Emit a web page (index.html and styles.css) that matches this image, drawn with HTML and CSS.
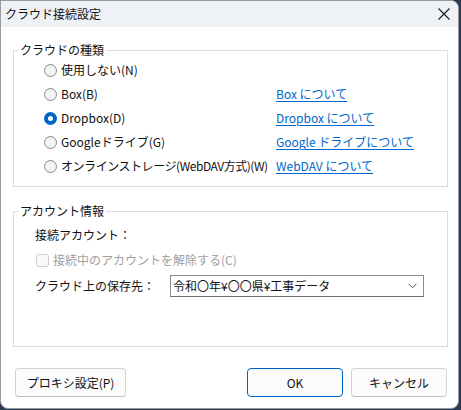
FILE: index.html
```html
<!DOCTYPE html>
<html lang="ja">
<head>
<meta charset="utf-8">
<link rel="stylesheet" href="styles.css">
</head>
<body>
<div class="window">
  <div class="titlebar">
    <span class="title">クラウド接続設定</span>
    <svg class="close" width="14" height="14" viewBox="0 0 14 14"><path d="M1.5 1.5 L12.5 12.5 M12.5 1.5 L1.5 12.5" stroke="#1a1a1a" stroke-width="1.1" fill="none"/></svg>
  </div>
  <div class="content">
    <fieldset class="group group-cloud">
      <legend>クラウドの種類</legend>
      <div class="group-body cloud-body">
        <div class="row"><span class="radio"></span><span class="label">使用しない(N)</span></div>
        <div class="row"><span class="radio"></span><span class="label">Box(B)</span><a class="link">Box について</a></div>
        <div class="row"><span class="radio checked"></span><span class="label">Dropbox(D)</span><a class="link">Dropbox について</a></div>
        <div class="row"><span class="radio"></span><span class="label">Googleドライブ(G)</span><a class="link">Google ドライブについて</a></div>
        <div class="row"><span class="radio"></span><span class="label narrow">オンラインストレージ(WebDAV方式)(W)</span><a class="link">WebDAV について</a></div>
      </div>
    </fieldset>
    <fieldset class="group group-account">
      <legend>アカウント情報</legend>
      <div class="group-body account-body">
        <div class="arow">接続アカウント：</div>
        <div class="arow disabled"><span class="checkbox"></span><span>接続中のアカウントを解除する(C)</span></div>
        <div class="arow combo-row">
          <span class="combo-label">クラウド上の保存先：</span>
          <div class="combo"><span>令和〇年¥〇〇県¥工事データ</span>
            <svg width="9" height="6" viewBox="0 0 9 6"><path d="M0.5 0.8 L4.5 4.8 L8.5 0.8" stroke="#555" stroke-width="1" fill="none"/></svg>
          </div>
        </div>
      </div>
    </fieldset>
    <div class="buttons">
      <button class="btn btn-proxy">プロキシ設定(P)</button>
      <div class="spacer"></div>
      <button class="btn btn-ok">OK</button>
      <button class="btn btn-cancel">キャンセル</button>
    </div>
  </div>
</div>
</body>
</html>
```
FILE: styles.css
```css
html, body {
  margin: 0;
  padding: 0;
}
body {
  width: 461px;
  height: 410px;
  background: #2b3a55;
  font-family: "Noto Sans CJK JP", "Noto Sans", sans-serif;
  font-size: 12px;
  color: #111111;
  overflow: hidden;
}
.window {
  width: 457px;
  height: 407px;
  background: #ffffff;
  border: 1px solid #9a9a9a;
  border-radius: 0 8px 8px 8px;
  overflow: hidden;
  display: flex;
  flex-direction: column;
}
.titlebar {
  height: 26px;
  flex: none;
  background: #eef2f7;
  display: flex;
  align-items: center;
  padding: 0 7px 0 4px;
}
.title {
  flex: 1;
  line-height: 16px;
}
.close {
  display: block;
}
.content {
  padding: 15px 10px 0 12px;
  display: flex;
  flex-direction: column;
}
.group {
  margin: 0;
  border: 1px solid #dcdcdc;
  padding: 0;
  min-width: 0;
}
.group legend {
  margin-left: 5px;
  padding: 0 2px 0 1px;
  line-height: 16px;
}
.cloud-body {
  padding: 0 0 8px 30px;
}
.row {
  height: 24px;
  display: flex;
  align-items: center;
  line-height: 16px;
}
.radio {
  width: 11px;
  height: 11px;
  border: 1px solid #8a8a8a;
  border-radius: 50%;
  background: #f4f4f4;
  flex: none;
  margin-right: 4px;
  box-sizing: content-box;
}
.radio.checked {
  width: 5px;
  height: 5px;
  border: 4px solid #0067c0;
  background: #ffffff;
}
.label {
  width: 215px;
  flex: none;
  white-space: nowrap;
}
.label.narrow {
  letter-spacing: -0.45px;
}
.link {
  color: #0066cc;
  text-decoration: underline;
  text-underline-offset: 2px;
  cursor: pointer;
}
.group-account {
  margin-top: 16px;
  height: 144px;
  box-sizing: border-box;
}
.account-body {
  padding: 4px 0 0 21px;
}
.arow {
  height: 24px;
  display: flex;
  align-items: center;
  line-height: 16px;
}
.disabled {
  color: #a0a0a0;
  margin-top: 1px;
}
.checkbox {
  width: 11px;
  height: 11px;
  border: 1px solid #cfcfcf;
  border-radius: 3px;
  background: #fafafa;
  margin: 0 4px 0 1px;
  flex: none;
}
.combo-row {
  margin-top: 2px;
}
.combo-label {
  width: 135px;
  flex: none;
}
.combo {
  width: 244px;
  height: 20px;
  border: 1px solid #8c8c8c;
  border-bottom-color: #6e6e6e;
  display: flex;
  align-items: center;
  justify-content: space-between;
  padding: 0 6px 0 2px;
  box-sizing: content-box;
  background: #fff;
}
.combo span {
  line-height: 16px;
}
.buttons {
  display: flex;
  margin-top: 21px;
  padding-left: 2px;
}
.spacer {
  flex: 1;
}
.btn {
  font-family: inherit;
  font-size: 12px;
  color: #111111;
  height: 29px;
  background: #fbfbfb;
  border: 1px solid #d3d3d3;
  border-bottom-color: #c2c2c2;
  border-radius: 4px;
  padding: 0;
  margin: 0;
}
.btn-proxy {
  width: 111px;
}
.btn-ok {
  width: 96px;
  border: 1px solid #0067c0;
  margin-right: 8px;
}
.btn-cancel {
  width: 96px;
  margin-right: 1px;
}
```
